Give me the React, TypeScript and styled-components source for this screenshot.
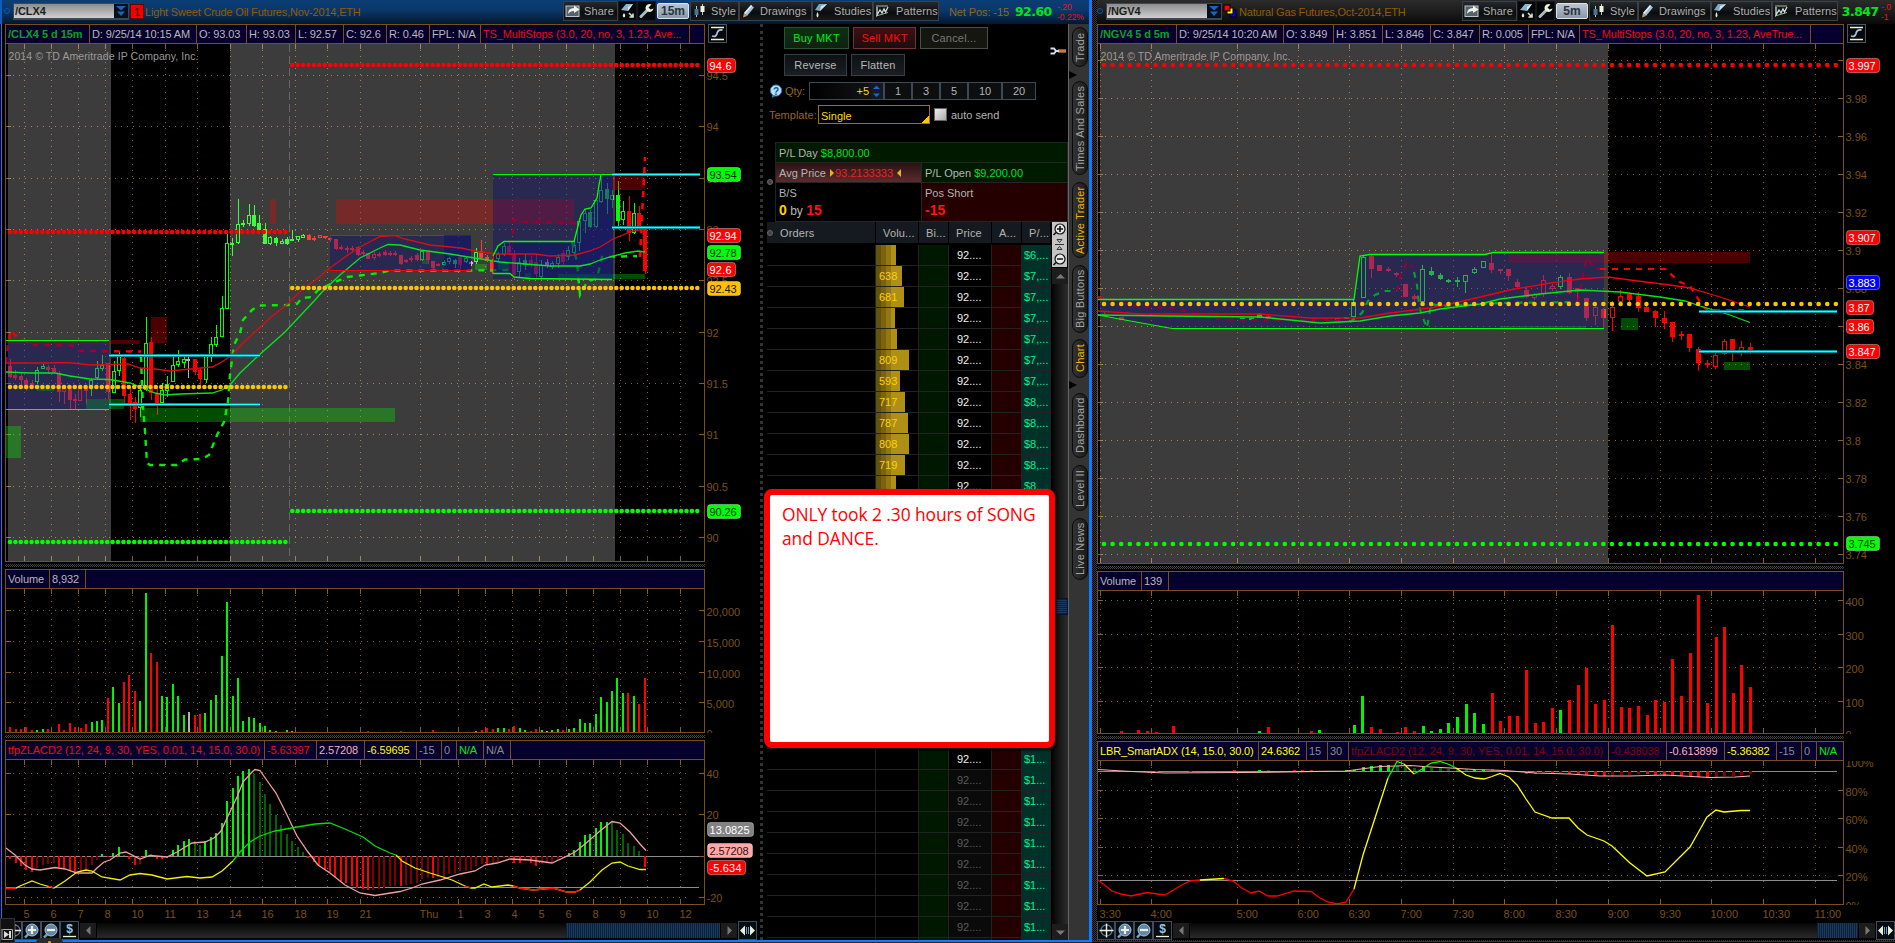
import React from "react";
import styled, { createGlobalStyle, css } from "styled-components";

const BROWN = "#7a5019";
const GRID = "#8c5c20";
const UP = "#00ff00";
const DOWN = "#ff0000";

const GlobalStyle = createGlobalStyle`
  html, body { margin: 0; padding: 0; background: #000; overflow: hidden; }
  body { font-family: "Liberation Sans", Arial, sans-serif; font-size: 11px; color: #b4b4b4; }
  *, *::before, *::after { box-sizing: border-box; }
  svg { display: block; flex: none; }
`;

/* ---------- page frame ---------- */

const Page = styled.div`
  display: flex;
  width: 1895px;
  height: 943px;
  background: #000;
  overflow: hidden;
`;

const LeftWindow = styled.div`
  position: relative;
  display: flex;
  flex-direction: column;
  width: 1092px;
  height: 942px;
  border: solid #0a7dff;
  border-width: 0 3px 2px 0;
  box-shadow: 0 3px 0 #2a2a2a;
`;

const RightWindow = styled.div`
  display: flex;
  flex-direction: column;
  width: 803px;
  height: 942px;
  padding-left: 5px;
  border-bottom: 1px solid #333;
  background: #000 conic-gradient(#3c3c3c 25%, #000 0 50%, #3c3c3c 0 75%, #000 0) 0 0 / 2px 2px;
`;

const LeftBody = styled.div`
  display: flex;
  flex: 1;
  min-height: 0;
  background: #000;
`;

const BlueEdge = styled.div`
  width: 5px;
  border-left: 1px solid #000;
  box-shadow: inset 1px 0 0 #0a7dff;
`;

const ChartColumn = styled.div<{ $w: number }>`
  display: flex;
  flex-direction: column;
  flex: none;
  width: ${(p) => p.$w}px;
  background: #000;
`;

const Gripper = styled.div<{ $w: number }>`
  flex: none;
  width: ${(p) => p.$w}px;
  height: 7px;
  border: solid #000;
  border-width: 2px 0;
  background: conic-gradient(#444 25%, #000 0 50%, #444 0 75%, #000 0) 0 0 / 2px 2px;
`;

/* ---------- title bar ---------- */

const TitleBar = styled.div<{ $blue?: boolean }>`
  display: flex;
  align-items: flex-start;
  flex: none;
  height: 24px;
  padding-left: ${(p) => (p.$blue ? 4 : 0)}px;
  white-space: nowrap;
  overflow: hidden;
  background: ${(p) =>
    p.$blue
      ? "linear-gradient(#0b3d75, #0a3769 45%, #03172c)"
      : "linear-gradient(#2b2b2b, #1c1c1c 50%, #090909)"};
  ${(p) => p.$blue && css`box-shadow: inset 2px 0 0 #0a5fc0;`}
`;

const LinkDot = styled.span`
  width: 6px;
  height: 6px;
  margin: 8px 3px 0 0;
  border: 1.5px solid #0d57ae;
  border-radius: 50%;
`;

const SymbolBox = styled.div`
  display: flex;
  width: 116px;
  height: 17px;
  margin-top: 3px;
  border: 1px solid #3c4757;
  border-bottom-width: 2px;
`;

const SymbolText = styled.span`
  flex: 1;
  padding-left: 1px;
  font-weight: bold;
  line-height: 15px;
  letter-spacing: -0.1px;
  color: #1c1c1c;
  background: linear-gradient(#8c8c8c, #d0d0d0);
`;

const SymbolArrow = styled.span`
  width: 14px;
  background: #070f1a;
`;

const AlertBadge = styled.span`
  width: 14px;
  height: 15px;
  margin: 4px 0 0 1px;
  border: 1px solid #6b0000;
  font-size: 11px;
  line-height: 14px;
  text-align: center;
  color: #200000;
  background: #f00000;
`;

const Title = styled.span<{ $w: number }>`
  width: ${(p) => p.$w}px;
  padding-left: 1px;
  line-height: 25px;
  letter-spacing: -0.18px;
  color: #8f5c06;
`;

const ToolButton = styled.span<{ $w: number; $gap?: number }>`
  display: flex;
  align-items: center;
  gap: ${(p) => p.$gap ?? 3}px;
  width: ${(p) => p.$w}px;
  height: 20px;
  margin-top: 1px;
  padding-left: 1px;
  border: 1px solid #3a4048;
  line-height: 18px;
  letter-spacing: 0.1px;
  color: #b0b0b0;
  background: linear-gradient(#26292c, #0b0c0e 60%, #17191b);
  overflow: hidden;
`;

const ToolIcon = styled(ToolButton)`
  background: #05070a;
  border-color: #15181c;
`;

const Timeframe = styled.span<{ $w: number }>`
  width: ${(p) => p.$w}px;
  height: 16px;
  margin: 3px 1px 0;
  border: 1px solid #dde3ea;
  border-radius: 2px;
  font-size: 12px;
  font-weight: bold;
  line-height: 15px;
  text-align: center;
  color: #2b3340;
  background: linear-gradient(#b9c4d0, #8a98a8);
`;

const NetPos = styled.span`
  width: 66px;
  margin-left: 10px;
  line-height: 24px;
  color: #93661e;
  letter-spacing: -0.1px;
`;

const LastPrice = styled.span<{ $w: number }>`
  width: ${(p) => p.$w}px;
  font-family: "DejaVu Sans", sans-serif;
  font-size: 12.4px;
  font-weight: bold;
  line-height: 24px;
  letter-spacing: -0.5px;
  color: #00e616;
`;

const Change = styled.span`
  display: flex;
  flex-direction: column;
  padding-top: 2px;
  font-size: 8.5px;
  line-height: 10px;
  color: #f01010;
`;

/* ---------- study header ---------- */

const InfoBar = styled.div<{ $w: number }>`
  display: flex;
  flex: none;
  width: ${(p) => p.$w}px;
  height: 20px;
  border: 1px solid ${BROWN};
  background: #06002e;
  overflow: hidden;
`;

const InfoCell = styled.span<{ $w: number; $c?: string; $b?: boolean; $s?: number }>`
  flex: none;
  width: ${(p) => p.$w}px;
  padding-left: 2px;
  border-right: 1px solid ${BROWN};
  line-height: 19px;
  white-space: nowrap;
  color: ${(p) => p.$c ?? "#b8b8b8"};
  font-weight: ${(p) => (p.$b ? "bold" : "normal")};
  letter-spacing: ${(p) => p.$s ?? -0.12}px;
`;

const HeadRow = styled.div`
  display: flex;
  gap: 3px;
`;

const ScaleButton = styled.span`
  width: 19px;
  height: 19px;
  border: 1px solid #4b535e;
  background: #04070c;
`;

/* ---------- bottom tool bar ---------- */

const BottomBar = styled.div`
  display: flex;
  flex: none;
  height: 19px;
`;

const BottomButton = styled.span<{ $w?: number }>`
  width: ${(p) => p.$w ?? 19}px;
  height: 19px;
  border: 1px solid #434c58;
  background: #070c12;
  overflow: hidden;
`;

const Arrow = styled.span`
  display: flex;
  align-items: center;
  justify-content: center;
  width: 16px;
  height: 15px;
  margin: 2px 1px 0;
  background: #1c1c1c;
`;

const Track = styled.span<{ $w: number }>`
  width: ${(p) => p.$w}px;
  height: 15px;
  margin-top: 2px;
  background: linear-gradient(#060606, #2a2a2a);
`;

const Thumb = styled.span<{ $w: number }>`
  width: ${(p) => p.$w}px;
  height: 15px;
  margin-top: 2px;
  background: repeating-linear-gradient(90deg, #0d2038 0 1px, #1a3a60 1px 2px);
`;

/* ---------- order entry ---------- */

const Side = styled.div`
  display: flex;
  flex-direction: column;
  width: 308px;
  height: 916px;
  flex: none;
  border-left: 3px dotted #333;
  overflow: hidden;
`;

const Controls = styled.div`
  height: 118px;
  flex: none;
  padding-left: 6px;
`;

const ButtonRow = styled.div<{ $top: number }>`
  display: flex;
  gap: 4px;
  padding: ${(p) => p.$top}px 0 0 15px;
`;

const OrderButton = styled.span<{ $w: number; $tone?: "buy" | "sell" | "off" }>`
  width: ${(p) => p.$w}px;
  height: 22px;
  border: 1px solid ${(p) => (p.$tone === "buy" ? "#2c5232" : p.$tone === "sell" ? "#6e3434" : p.$tone === "off" ? "#4d4d48" : "#343e48")};
  text-align: center;
  line-height: 21px;
  letter-spacing: 0.2px;
  color: ${(p) => (p.$tone === "buy" ? "#00ea10" : p.$tone === "sell" ? "#ff0a0a" : p.$tone === "off" ? "#777" : "#b8b8b8")};
  background: ${(p) =>
    p.$tone === "buy"
      ? "linear-gradient(#0d3010, #102013)"
      : p.$tone === "sell"
      ? "linear-gradient(#401013, #1c0d0e)"
      : p.$tone === "off"
      ? "#161611"
      : "linear-gradient(#0e1114, #1b1e22)"};
`;

const Spacer = styled.span`
  flex: 1;
`;

/* The tool glyph hangs below its button row */
const SetupIcon = styled.svg`
  width: 17px;
  height: 22px;
  margin-right: 1px;
  overflow: visible;
`;

const QtyRow = styled.div`
  display: flex;
  align-items: center;
  height: 18px;
  margin-top: 6px;
`;

const Label = styled.span<{ $w: number }>`
  width: ${(p) => p.$w}px;
  color: #93661e;
`;

const QtyInput = styled.span`
  display: flex;
  justify-content: flex-end;
  width: 75px;
  height: 18px;
  border: 1px solid #3c4957;
  line-height: 17px;
  color: #ffd000;
  background: linear-gradient(90deg, #000, #181818);
`;

const QtyCell = styled.span<{ $w: number }>`
  width: ${(p) => p.$w}px;
  height: 18px;
  border: 1px solid #3c4957;
  text-align: center;
  line-height: 17px;
  background: #0c0e10;
`;

const TemplateRow = styled.div`
  display: flex;
  align-items: center;
  height: 19px;
  margin-top: 5px;
`;

const TemplateBox = styled.span`
  width: 112px;
  height: 19px;
  margin-right: 4px;
  padding-left: 2px;
  border: 1px solid #a87008;
  line-height: 20px;
  color: #ffd800;
  background: linear-gradient(315deg, #ffc800 5px, transparent 5.5px);
`;

const Check = styled.span`
  width: 13px;
  height: 13px;
  margin-right: 4px;
  border: 1px solid #666;
  background: linear-gradient(135deg, #eee, #aaa);
`;

const SummaryRow = styled.div`
  display: flex;
  align-items: center;
  flex: none;
  height: 80px;
`;

const Pin = styled.span`
  flex: none;
  width: 6px;
  height: 6px;
  margin: 0 2px 0 4px;
  border: 1px solid #666;
  border-radius: 50%;
  background: #444;
`;

const Summary = styled.div`
  display: grid;
  grid-template: 20px 20px 39px / 146px 1fr;
  flex: 1;
  height: 80px;
  border-left: 1px solid #222;
  border-top: 1px solid #222;
`;

const SummaryCell = styled.div<{ $bg: string; $wide?: boolean }>`
  padding-left: 3px;
  border: solid #252525;
  border-width: 0 1px 1px 0;
  line-height: 20px;
  white-space: nowrap;
  background: ${(p) => p.$bg};
  ${(p) => p.$wide && css`grid-column: 1 / 3;`}
  em { font-style: normal; color: #00e020; }
  i { font-style: normal; color: #f02020; }
`;

const Mark = styled.span<{ $left?: boolean }>`
  display: inline-block;
  margin: 0 ${(p) => (p.$left ? 0 : 1)}px 0 1px;
  border: 4px solid transparent;
  ${(p) => (p.$left ? "border-right-color: #e8b41c; border-left: 0;" : "border-left-color: #e8b41c; border-right: 0;")}
`;

const Big = styled.div`
  line-height: 14px;
  color: #b8b8b8;
  font-size: 12px;
  b { font-size: 14px; color: #ff1414; }
  b:first-child:not(:last-child) { color: #ffd000; }
`;

const LadderArea = styled.div`
  display: flex;
  flex: 1;
  min-height: 0;
`;

const Ladder = styled.div`
  width: 284px;
  margin-left: 4px;
  flex: none;
  overflow: hidden;
`;

const ladderCols = "109px 43px 30px 43px 30px 29px";

const LadderHead = styled.div`
  display: grid;
  grid-template-columns: ${ladderCols};
  height: 21px;
  margin-bottom: 2px;
  line-height: 22px;
  letter-spacing: 0.15px;
`;

const HeadCell = styled.span<{ $pin?: boolean }>`
  display: flex;
  align-items: center;
  padding-left: ${(p) => (p.$pin ? 0 : 7)}px;
  border-right: 1px solid #000;
  background: #141a1f;
  white-space: nowrap;
  overflow: hidden;
  ${Pin} { margin: 0 7px 0 0; }
`;

const LadderRow = styled.div<{ $dim: boolean }>`
  display: grid;
  grid-template-columns: ${ladderCols};
  height: 21px;
  line-height: 21px;
  color: ${(p) => (p.$dim ? "#5c5c5c" : "#f0f0f0")};
  span { border: solid #222; border-width: 0 1px 1px 0; white-space: nowrap; overflow: hidden; }
  span:nth-child(3) { background: #001800; }
  span:nth-child(4) { padding-left: 8px; background: ${(p) => (p.$dim ? "#0a0a0a" : "#000")}; }
  span:nth-child(5) { background: #240000; }
  span:nth-child(6) { padding-left: 2px; color: #00f090; background: #00302a; }
`;

const VolumeCell = styled.span`
  background: #000;
`;

const VolumeFill = styled.div<{ $w: number }>`
  width: ${(p) => p.$w}px;
  height: 20px;
  padding-left: 3px;
  color: #ffd000;
  white-space: nowrap;
  background: linear-gradient(90deg, #64510c 0 5px, #7a620e 5px 10px, #927813 10px 15px, #ae9016 15px);
`;

const Scroll = styled.div`
  display: flex;
  flex-direction: column;
  width: 16px;
  margin-left: 1px;
`;

const ScrollTrack = styled.div<{ $h: number }>`
  height: ${(p) => p.$h}px;
  flex: none;
  background: linear-gradient(90deg, #050505, #2c2c2c);
`;

const ScrollThumb = styled.div`
  height: 17px;
  flex: none;
  border: 1px solid #081424;
  background: repeating-linear-gradient(#0d2038 0 1px, #1a3a60 1px 2px);
`;

const ScrollBtn = styled.div`
  display: flex;
  align-items: center;
  justify-content: center;
  height: 16px;
  flex: none;
  background: #1d1d1d;
`;

const TabStrip = styled.div`
  display: flex;
  flex-direction: column;
  align-items: flex-end;
  width: 21px;
  padding-right: 1px;
  border-left: 1px solid #666;
  background: #343434;
`;

const Tab = styled.div<{ $h: number; $gap: number; $on?: boolean }>`
  display: flex;
  align-items: center;
  justify-content: center;
  width: 16px;
  height: ${(p) => p.$h}px;
  margin-top: ${(p) => p.$gap}px;
  flex: none;
  border: 1px solid #0a0a0a;
  border-radius: 8px;
  writing-mode: vertical-rl;
  transform: rotate(180deg);
  letter-spacing: 0.2px;
  white-space: nowrap;
  color: ${(p) => (p.$on ? "#f0b400" : "#a4a4a4")};
  background: linear-gradient(90deg, #1a1a1a, #333);
`;

const TabArrow = styled.div<{ $gap: number }>`
  align-self: flex-start;
  width: 0;
  height: 0;
  margin: ${(p) => p.$gap}px 0 0;
  border: 4px solid transparent;
  border-left: 8px solid #000;
  border-right: 0;
`;

/* Sticky note that floats over the ladder */
const Note = styled.div`
  position: absolute;
  left: 764px;
  top: 489px;
  width: 291px;
  height: 259px;
  padding: 7px 12px;
  border: 6px solid #ff0000;
  border-radius: 8px;
  box-shadow: 2px 2px 3px rgba(0, 0, 0, 0.8);
  font-family: "Open Sans", "Noto Sans", sans-serif;
  font-size: 17.4px;
  line-height: 24px;
  white-space: nowrap;
  letter-spacing: -0.07px;
  color: #ff0000;
  background: #fff;
`;

/* Corner controls that sit over the window's lower edge */
const CornerTool = styled.div`
  position: absolute;
  left: 0;
  top: 918px;
  width: 15px;
  height: 25px;
  padding-top: 9px;
  border: 1px solid #333;
  background: #111;
`;

const Notch = styled.div`
  position: absolute;
  left: 36px;
  top: 938px;
  width: 27px;
  height: 6px;
  border-radius: 5px 5px 0 0;
  background: radial-gradient(circle at 50% 80%, #d8a018 1.5px, #2a2a2a 2px);
`;

/* ---------- icons ---------- */

const ShareIcon = () => (
  <svg width="16" height="14" viewBox="0 0 16 14">
    <rect x="1" y="2" width="13" height="10.5" fill="#54626f" stroke="#b9c6d0" />
    <path d="M3 10 Q3 4 9 4 V1.5 L14.5 5.5 L9 9 V7 Q5 7 3 10Z" fill="#f2f2e2" />
  </svg>
);
const FilterIcon = () => (
  <svg width="16" height="16" viewBox="0 0 16 16">
    <path d="M1 7 L6 1 H13 L8 8Z" fill="#8fb2cc" />
    <path d="M8 4 L13 1 L8 8Z" fill="#dcebf2" />
    <path d="M4 10 Q1.5 13 4 14.5 Q6.5 13 4 10Z" fill="#e8ecc8" />
    <path d="M9 10 L13 14 M13 10.5 V14 H9.5" stroke="#d8e2c8" strokeWidth="1.6" fill="none" />
  </svg>
);
const WrenchIcon = () => (
  <svg width="16" height="16" viewBox="0 0 16 16">
    <path d="M2 13.5 L8.5 7" stroke="#a9bcc4" strokeWidth="3" strokeLinecap="round" />
    <path d="M12.5 1.5 A4 4 0 1 0 14.5 5.5 L11.5 6.5 L9.5 4.5Z" fill="#ecf0dc" />
  </svg>
);
const CandleIcon = () => (
  <svg width="15" height="16" viewBox="0 0 15 16">
    <path d="M4.5 3 V14 M10.5 1 V12" stroke="#b9c4cc" />
    <rect x="2.5" y="6" width="4" height="6" fill="#4d7394" />
    <rect x="8.5" y="3" width="4" height="6" fill="#eef2dc" />
  </svg>
);
const PencilIcon = () => (
  <svg width="15" height="16" viewBox="0 0 15 16">
    <path d="M3 10 L10 2 L13 4.5 L6 13Z" fill="#9fc0d8" />
    <path d="M3 10 L10 2 L11.2 3 L4.3 11Z" fill="#e4eff5" />
    <path d="M3 10 L6 13 L2 14.5Z" fill="#d09a50" />
  </svg>
);
const StudyIcon = () => (
  <svg width="15" height="16" viewBox="0 0 15 16">
    <path d="M1 7 L5 1 H13 L6 8Z" fill="#7ea4c0" />
    <path d="M7 3 L13 1 L6 8Z" fill="#d3e4ee" />
    <path d="M3.5 9 Q1.5 13 3.5 14.5 Q5.5 13 3.5 9Z" fill="#e8ecc8" />
  </svg>
);
const PatternIcon = () => (
  <svg width="15" height="14" viewBox="0 0 15 14">
    <path d="M1 2 H13 M1 12 L13 8.5" stroke="#9fbe8c" />
    <path d="M2 3 V11 L5 6 L7 9 L9 5 L10.5 8 L13 3" stroke="#d4e0e8" strokeWidth="1.3" fill="none" />
  </svg>
);
const SCurve = () => (
  <svg width="17" height="17" viewBox="0 0 17 17">
    <path d="M2 2.5 H15 M2 14.5 H15" stroke="#f4f2c8" strokeWidth="1.4" />
    <path d="M3 11 Q7 12.5 8 8.5 Q9 4 13.5 5" stroke="#9fc6e0" strokeWidth="1.8" fill="none" />
  </svg>
);
const DoubleDown = () => (
  <svg width="14" height="14" viewBox="0 0 14 14">
    <path d="M2 2 H12 L7 6.5Z M3 7.5 H11 L7 12Z" fill="#1c63ba" />
  </svg>
);
const CrossIcon = () => (
  <svg width="17" height="17" viewBox="0 0 17 17">
    <circle cx="8.5" cy="8.5" r="5.5" fill="none" stroke="#5a7690" strokeWidth="1.3" />
    <path d="M8.5 1.5 V15.5 M1.5 8.5 H15.5" stroke="#eef0d4" strokeWidth="1.4" />
  </svg>
);
const ZoomIcon = ({ minus }: { minus?: boolean }) => (
  <svg width="17" height="17" viewBox="0 0 17 17">
    <path d="M2 15.5 L5 12.5" stroke="#7ca6c8" strokeWidth="2.4" />
    <circle cx="9" cy="8" r="6" fill="#6288a8" stroke="#a4c2d8" />
    <path d={minus ? "M5 8 H13" : "M5 8 H13 M9 4 V12"} stroke="#f0f0d8" strokeWidth="2.2" />
  </svg>
);
const DollarIcon = () => (
  <svg width="17" height="17" viewBox="0 0 17 17">
    <text x="8.5" y="11" fontSize="12" fontWeight="bold" textAnchor="middle" fill="#9cc4e0">$</text>
    <path d="M2 14.5 H15" stroke="#f4f2c8" strokeWidth="1.3" />
  </svg>
);
const ExpandIcon = () => (
  <svg width="17" height="17" viewBox="0 0 17 17">
    <path d="M1 8.5 L6 3.5 V13.5Z M16 8.5 L11 3.5 V13.5Z" fill="#e8efd8" />
    <path d="M7.5 5 V12 M9.5 5 V12" stroke="#6d9cc4" />
  </svg>
);
const Tri = ({ d }: { d: string }) => (
  <svg width="9" height="9" viewBox="0 0 9 9">
    <path d={d} fill="#777" />
  </svg>
);

/* ---------- chart primitives ---------- */

type Candle = [number, number, number, number, number, string];

const candleColor = (k: string) => (k === "w" ? "#b4b4b4" : k.toLowerCase() === "g" ? UP : DOWN);

const Candles = ({ data, w }: { data: Candle[]; w: number }) => (
  <g shapeRendering="crispEdges">
    {data.map(([x, hi, lo, top, bot, k], i) => {
      const c = candleColor(k);
      const hollow = k === "g" || k === "r";
      const cx = Math.floor(x);
      const l = cx - Math.floor(w / 2);
      const h = Math.max(2, bot - top);
      return (
        <g key={i}>
          <path d={`M${cx + 0.5} ${hi} V${hollow ? top : lo} M${cx + 0.5} ${bot} V${Math.max(lo, bot)}`} stroke={c} />
          {hollow ? (
            <rect x={l + 0.5} y={top + 0.5} width={w - 1} height={Math.max(1, h - 1)} fill="#000" stroke={c} />
          ) : (
            <rect x={l} y={top} width={w} height={h} fill={c} />
          )}
        </g>
      );
    })}
  </g>
);

type GridProps = { xs: number[]; ys: number[]; l: number; r: number; t: number; b: number };

const Grid = ({ xs, ys, l, r, t, b }: GridProps) => (
  <g stroke={GRID} shapeRendering="crispEdges" fill="none">
    {xs.map((x) => (
      <g key={x}>
        <path d={`M${x} ${t + 6} V${b - 13}`} strokeDasharray="1 5" />
        <path d={`M${x} ${t} V${t + 5} M${x} ${b - 5} V${b}`} />
      </g>
    ))}
    {ys.map((y) => (
      <g key={y}>
        <path d={`M${l + 8} ${y} H${r - 14}`} strokeDasharray="1 5" />
        <path d={`M${l} ${y} H${l + 6} M${r - 5} ${y} H${r}`} />
      </g>
    ))}
  </g>
);

const Frame = ({ l, r, t, b }: { l: number; r: number; t: number; b: number }) => (
  <path d={`M${l + 0.5} ${t} V${b + 0.5} H${r + 0.5} V${t}`} fill="none" stroke={BROWN} shapeRendering="crispEdges" />
);

const Dots = ({ x1, x2, y, step, c }: { x1: number; x2: number; y: number; step: number; c: string }) => {
  const out: number[] = [];
  for (let x = x1; x <= x2; x += step) out.push(x);
  return (
    <g fill={c}>
      {out.map((x) => (
        <circle key={x} cx={x} cy={y} r="2.3" />
      ))}
    </g>
  );
};

const Cyan = ({ x1, x2, y }: { x1: number; x2: number; y: number }) => (
  <g shapeRendering="crispEdges">
    <path d={`M${x1} ${y} H${x2}`} stroke="#009097" strokeWidth="3" />
    <path d={`M${x1} ${y} H${x2}`} stroke="#20ffff" />
  </g>
);

const Line = ({ p, c, w = 1.3, dash }: { p: string; c: string; w?: number; dash?: boolean }) => (
  <polyline points={p} fill="none" stroke={c} strokeWidth={w} strokeDasharray={dash ? "6 6" : undefined} />
);

const Labels = ({ x, items }: { x: number; items: [string, number][] }) => (
  <g fill={BROWN} fontSize="11">
    {items.map(([s, y]) => (
      <text key={s} x={x} y={y + 4.5}>{s}</text>
    ))}
  </g>
);

const Tag = ({ x, y, w, s, bg, fg = "#fff" }: { x: number; y: number; w: number; s: string; bg: string; fg?: string }) => (
  <g>
    <rect x={x + 0.5} y={y + 0.5} width={w - 1} height="14" rx="3" fill={bg} stroke="#fff" strokeOpacity="0.35" />
    <text x={x + 2.5} y={y + 11.5} fontSize="11" fill={fg} textLength={w - 7}>{s}</text>
  </g>
);

/* bars: x, y of the far end, colour key; d/D are the faded green and red */
type Bar = [number, number, string];
const barColor: Record<string, string> = { g: "#00f400", r: "#ff0000", w: "#b4b4b4", d: "#006400", D: "#800000" };
const Bars = ({ data, base, w }: { data: Bar[]; base: number; w: number }) => (
  <g shapeRendering="crispEdges">
    {data.map(([x, y, k], i) => (
      <rect key={i} x={x - 1} y={Math.min(y, base)} width={w} height={Math.max(1, Math.abs(base - y))} fill={barColor[k]} />
    ))}
  </g>
);

/* ---------- crude oil data ---------- */

const clX = [24.5, 51.5, 78.5, 105.5, 132.5, 165.5, 197.5, 230.5, 262.5, 295.5, 327.5, 360.5, 420.5, 458.5, 485.5, 512.5, 539.5, 566.5, 593.5, 620.5, 647.5, 680.5];
const clTimes = ["5", "6", "7", "8", "10", "11", "13", "14", "16", "18", "19", "21", "Thu", "1", "3", "4", "5", "6", "8", "9", "10", "12"];
const clY = [75.5, 126.5, 178.5, 229.5, 280.5, 332.5, 383.5, 434.5, 486.5, 537.5];
const clPrices = ["94.5", "94", "93.5", "93", "92.5", "92", "91.5", "91", "90.5", "90"];

const clCandles: Candle[] = [
  [10, 359, 378, 366, 377, "R"], [15, 370, 380, 375, 378, "R"], [21, 372, 387, 376, 380, "R"], [26, 378, 391, 380, 386, "R"],
  [32, 380, 387, 383, 387, "R"], [37, 367, 384, 370, 382, "g"], [43, 364, 369, 366, 369, "g"], [48, 365, 374, 367, 370, "R"],
  [54, 365, 373, 368, 372, "R"], [59, 371, 402, 373, 392, "R"], [64, 386, 404, 387, 392, "r"], [70, 385, 409, 386, 400, "R"],
  [75, 394, 409, 399, 401, "R"], [80, 385, 401, 387, 401, "r"], [86, 387, 404, 388, 391, "R"], [91, 378, 396, 380, 388, "g"],
  [97, 361, 379, 368, 378, "g"], [102, 355, 371, 365, 369, "g"], [108, 363, 399, 363, 392, "R"], [114, 361, 393, 371, 393, "g"],
  [119, 352, 376, 356, 371, "g"], [124, 354, 406, 358, 396, "R"], [130, 387, 420, 394, 403, "R"], [135, 397, 423, 402, 409, "R"],
  [140, 385, 417, 390, 408, "g"], [146, 317, 391, 343, 390, "g"], [151, 337, 400, 342, 393, "R"], [157, 388, 415, 393, 404, "R"],
  [162, 383, 405, 390, 403, "g"], [167, 376, 397, 384, 391, "g"], [173, 354, 382, 365, 382, "g"], [178, 350, 367, 361, 365, "g"],
  [184, 356, 368, 359, 363, "g"], [188, 357, 378, 359, 361, "w"], [195, 359, 375, 359, 372, "R"], [200, 368, 386, 370, 379, "R"],
  [206, 354, 383, 354, 380, "g"], [211, 337, 362, 344, 355, "g"], [216, 325, 347, 337, 345, "g"], [222, 296, 337, 308, 337, "g"],
  [227, 234, 309, 243, 309, "g"], [232, 238, 256, 243, 245, "G"], [238, 199, 244, 224, 243, "g"], [243, 220, 227, 223, 225, "G"],
  [249, 204, 226, 215, 224, "g"], [254, 205, 227, 215, 226, "G"], [259, 215, 230, 223, 230, "G"], [265, 223, 244, 229, 244, "G"],
  [270, 236, 245, 237, 244, "g"], [276, 237, 246, 238, 243, "G"], [282, 239, 244, 241, 244, "g"], [287, 237, 245, 239, 244, "G"],
  [292, 230, 241, 239, 241, "G"], [298, 236, 242, 236, 240, "g"], [303, 234, 238, 235, 238, "g"], [309, 234, 240, 235, 240, "R"],
  [314, 236, 241, 238, 240, "R"], [320, 235, 238, 235, 238, "r"], [325, 236, 239, 236, 238, "R"], [330, 237, 242, 238, 240, "R"],
  [336, 239, 250, 239, 249, "R"], [341, 245, 250, 247, 249, "R"], [347, 246, 253, 248, 250, "R"], [352, 246, 253, 248, 250, "r"],
  [358, 246, 256, 247, 255, "R"], [363, 250, 256, 252, 254, "R"], [368, 253, 259, 253, 259, "R"], [374, 252, 260, 254, 258, "r"],
  [379, 252, 257, 254, 255, "R"], [385, 250, 256, 252, 255, "R"], [390, 251, 256, 253, 255, "R"], [395, 251, 256, 253, 255, "R"],
  [401, 255, 265, 255, 264, "R"], [406, 259, 263, 260, 262, "R"], [411, 256, 262, 258, 260, "R"], [417, 253, 261, 255, 260, "R"],
  [422, 250, 261, 251, 260, "g"], [428, 250, 264, 251, 260, "R"], [433, 261, 270, 261, 268, "R"], [438, 263, 266, 264, 265, "R"],
  [444, 260, 266, 262, 265, "g"], [449, 257, 264, 258, 262, "g"], [455, 259, 268, 260, 264, "G"], [460, 255, 269, 257, 265, "R"],
  [466, 257, 263, 258, 262, "g"], [471, 261, 266, 262, 264, "w"], [476, 248, 264, 252, 262, "g"], [481, 240, 259, 251, 258, "R"],
  [487, 255, 262, 257, 261, "R"], [492, 259, 274, 260, 272, "R"], [498, 252, 262, 254, 259, "g"], [504, 243, 256, 246, 255, "g"],
  [509, 242, 255, 246, 253, "R"], [514, 250, 280, 255, 275, "R"], [519, 258, 278, 262, 272, "g"], [525, 254, 270, 260, 265, "G"],
  [531, 256, 268, 260, 264, "R"], [536, 255, 278, 262, 274, "R"], [541, 260, 279, 265, 277, "g"], [547, 259, 268, 262, 265, "w"],
  [552, 261, 269, 263, 267, "g"], [558, 254, 268, 257, 264, "g"], [563, 250, 265, 253, 262, "R"], [568, 246, 260, 250, 257, "g"],
  [574, 240, 256, 245, 253, "g"], [579, 218, 251, 221, 243, "g"], [585, 209, 233, 213, 221, "g"], [590, 210, 228, 212, 227, "G"],
  [596, 198, 228, 200, 227, "g"], [601, 179, 203, 190, 202, "g"], [607, 183, 214, 189, 199, "G"], [612, 190, 208, 195, 200, "g"],
  [618, 181, 227, 195, 221, "G"], [623, 201, 225, 211, 220, "g"], [629, 196, 241, 211, 233, "R"], [634, 203, 234, 213, 233, "g"],
  [639, 206, 229, 213, 227, "R"], [645, 227, 274, 227, 271, "R"],
];

const parseBars = (s: string): Bar[] =>
  s.trim().split(/\s+/).map((t) => {
    const [x, y, k] = t.split(",");
    return [Number(x), Number(y), k] as Bar;
  });

const clVolume = parseBars(`10,727,r 16,729,r 21,729,r 26,727,r 32,730,r 37,730,g 43,729,g 48,729,r 59,724,r 64,730,r 70,723,r 75,727,r 81,728,r 86,724,r
92,722,g 97,721,g 102,720,g 108,698,r 113,687,g 119,703,g 124,682,r 129,675,r 135,691,r 140,701,g 146,593,g 151,653,r 157,662,r 162,696,g 167,697,g
173,684,g 178,696,g 184,715,g 189,712,w 195,715,r 200,714,r 205,713,g 211,700,g 216,695,g 222,656,g 227,602,g 233,696,g 238,678,g 243,721,g 249,717,g
254,718,g 260,723,g 265,726,g 270,730,g 276,731,g 287,730,g 292,731,g 368,731,r 401,731,r 433,730,r 476,731,g 482,730,r 487,728,r 493,729,r 498,728,g
504,728,g 509,729,r 514,726,r 520,728,g 525,730,g 531,731,r 536,729,r 542,730,g 547,731,w 552,730,g 558,729,g 563,730,r 569,729,g 574,728,g 580,719,g
585,723,g 590,723,g 596,714,g 601,697,g 607,702,g 612,691,g 617,678,g 623,693,g 628,693,r 634,696,g 639,704,r 645,678,r`);

const clHist = parseBars(`10,859,r 16,863,r 21,866,r 26,870,r 32,872,r 37,868,D 43,865,D 48,864,D 54,863,D 59,867,r 64,869,r 70,871,r 75,873,r 81,872,D 86,870,D
92,865,D 97,860,D 102,854,g 108,857,r 113,853,g 119,847,g 124,855,d 129,859,r 135,865,r 140,864,D 146,850,g 151,854,d 157,859,r 162,859,r 167,858,r 173,850,g
178,845,g 184,841,g 189,839,g 195,841,d 200,845,d 205,841,g 211,837,g 216,833,g 222,823,g 227,801,g 233,788,g 238,776,g 243,771,g 249,769,g 254,774,d
260,782,d 265,794,d 270,804,d 276,815,d 281,825,d 287,834,d 292,841,d 298,847,d 303,852,d 308,858,r 314,862,r 319,865,r 325,869,r 330,872,r 335,877,r
341,881,r 346,883,r 352,886,r 357,888,r 363,889,r 368,890,r 373,890,D 379,889,D 384,888,D 390,886,D 395,886,D 401,886,r 406,885,D 411,884,D 417,883,D
422,879,D 428,878,D 433,878,r 438,877,D 444,877,D 449,874,D 455,873,D 460,871,D 466,871,D 471,870,D 476,866,D 482,864,D 487,865,r 493,864,D 498,862,D
504,858,D 509,858,D 514,863,r 520,863,r 525,861,D 531,863,r 536,866,r 542,864,D 547,863,D 552,862,D 558,860,D 563,858,D 569,853,g 574,850,g 580,842,g
585,835,g 590,834,g 596,828,g 601,822,g 607,822,g 612,822,d 617,830,d 623,834,d 628,843,d 634,846,d 639,851,d 645,867,r`);

/* ---------- natural gas data ---------- */

const ngX = [1100.5, 1151.5, 1237.5, 1298.5, 1349.5, 1401.5, 1453.5, 1504.5, 1556.5, 1608.5, 1660.5, 1711.5, 1763.5, 1815.5];
const ngTimes = ["3:30", "4:00", "5:00", "6:00", "6:30", "7:00", "7:30", "8:00", "8:30", "9:00", "9:30", "10:00", "10:30", "11:00"];
const ngY = [60.5, 98.5, 136.5, 174.5, 212.5, 250.5, 288.5, 326.5, 364.5, 402.5, 440.5, 478.5, 516.5, 554.5];
const ngPrices = ["4", "3.98", "3.96", "3.94", "3.92", "3.9", "3.88", "3.86", "3.84", "3.82", "3.8", "3.78", "3.76", "3.74"];

const ngCandles: Candle[] = [
  [1104, 311, 316, 314, 316, "r"], [1121, 317, 320, 317, 320, "R"], [1242, 318, 320, 318, 320, "g"], [1251, 317, 320, 318, 320, "G"],
  [1259, 313, 318, 314, 318, "G"], [1268, 315, 320, 316, 319, "R"], [1337, 318, 320, 318, 320, "G"], [1346, 317, 319, 317, 319, "g"],
  [1353, 300, 318, 302, 317, "g"], [1363, 256, 298, 257, 298, "g"], [1371, 255, 278, 256, 269, "R"], [1379, 265, 271, 265, 271, "R"],
  [1388, 267, 272, 269, 271, "R"], [1396, 272, 277, 273, 275, "R"], [1405, 284, 297, 284, 297, "R"], [1414, 294, 302, 296, 299, "R"],
  [1422, 265, 302, 269, 302, "g"], [1431, 267, 276, 271, 275, "G"], [1440, 273, 280, 275, 279, "G"], [1448, 279, 283, 280, 282, "G"],
  [1457, 277, 287, 280, 282, "G"], [1465, 275, 293, 275, 282, "g"], [1474, 267, 274, 269, 273, "g"], [1483, 261, 268, 261, 268, "g"],
  [1491, 254, 273, 263, 270, "R"], [1500, 269, 274, 269, 271, "R"], [1508, 269, 281, 269, 276, "R"], [1517, 279, 288, 282, 287, "R"],
  [1526, 286, 298, 290, 297, "R"], [1534, 293, 300, 294, 298, "r"], [1543, 275, 297, 280, 294, "r"], [1552, 284, 291, 286, 289, "r"],
  [1560, 275, 289, 277, 287, "g"], [1569, 273, 294, 277, 293, "R"], [1577, 288, 302, 288, 292, "R"], [1586, 298, 321, 298, 318, "R"],
  [1595, 305, 325, 307, 316, "r"], [1603, 308, 328, 309, 318, "R"], [1612, 301, 331, 307, 318, "r"], [1620, 290, 305, 296, 302, "r"],
  [1629, 292, 303, 294, 300, "R"], [1638, 292, 312, 296, 308, "R"], [1646, 305, 312, 307, 312, "R"], [1655, 310, 327, 311, 318, "R"],
  [1664, 311, 329, 318, 323, "R"], [1672, 322, 342, 322, 337, "R"], [1681, 331, 340, 334, 336, "R"], [1689, 334, 352, 334, 348, "R"],
  [1698, 347, 371, 349, 363, "R"], [1707, 360, 368, 363, 365, "R"], [1715, 353, 369, 355, 367, "r"], [1724, 339, 355, 341, 354, "r"],
  [1732, 339, 361, 339, 353, "R"], [1741, 341, 356, 347, 353, "r"], [1750, 343, 354, 347, 352, "R"],
];

const ngVolume = parseBars(`1121,731,r 1138,730,r 1147,731,r 1156,732,r 1173,726,r 1259,731,g 1268,727,r 1311,731,r 1319,730,g 1354,725,g 1362,696,g
1371,727,r 1380,729,r 1397,732,r 1405,727,r 1414,731,r 1423,726,g 1431,731,g 1440,729,g 1448,723,g 1457,717,g 1466,704,g 1474,713,g 1483,724,g 1492,693,r
1500,721,r 1509,716,r 1517,716,r 1526,670,r 1535,723,r 1543,722,r 1552,708,r 1560,710,g 1569,700,r 1578,685,r 1586,668,r 1595,704,r 1604,700,r 1612,625,r
1621,707,r 1629,708,r 1638,706,r 1647,715,r 1655,700,r 1664,702,r 1672,659,r 1681,696,r 1690,653,r 1698,595,r 1707,703,r 1716,637,r 1724,627,r 1733,693,r
1741,665,r 1750,687,r`);

const ngHist = parseBars(`1113,770,r 1156,772,r 1190,772,r 1234,770,r 1259,770,g 1268,770,d 1294,770,r 1302,770,r 1311,770,r 1320,772,g 1346,770,g 1354,770,g
1363,767,g 1371,766,g 1380,765,g 1388,765,g 1397,766,d 1405,767,d 1414,768,d 1423,767,g 1431,768,d 1440,768,d 1448,769,d 1457,769,d 1466,769,d 1474,770,g
1483,770,g 1492,769,d 1526,774,r 1535,774,r 1543,773,D 1552,774,r 1560,773,D 1569,774,r 1578,774,r 1586,775,r 1595,775,r 1604,776,r 1612,776,D 1621,775,D
1629,775,D 1638,774,D 1647,774,r 1655,775,r 1664,775,r 1672,775,r 1681,776,r 1690,776,r 1698,777,r 1707,778,r 1716,777,D 1724,776,D 1733,776,D 1741,775,D
1750,774,D`);

/* ---------- crude charts ---------- */

const BOX = "rgba(0,0,128,0.32)";
const REDZONE = "rgba(255,0,0,0.3)";
const GREENZONE = "rgba(0,255,0,0.3)";

const CrudePrice = () => (
  <svg width="755" height="518" viewBox="5 44 755 518">
    <Grid xs={clX} ys={clY} l={5} r={704} t={44} b={561} />
    <Candles data={clCandles} w={4} />
    <g fill="rgba(255,255,255,0.235)" shapeRendering="crispEdges">
      <rect x="8" y="44" width="103" height="517" />
      <rect x="230" y="44" width="385" height="517" />
    </g>
    <path d="M289.5 44 V561" stroke="#666" strokeDasharray="8 4" />
    <g fill={REDZONE} shapeRendering="crispEdges">
      <rect x="336" y="199" width="238" height="25" />
      <rect x="270" y="199" width="6" height="25" />
      <rect x="6" y="340" width="134" height="4" />
      <rect x="151" y="317" width="16" height="26" />
      <rect x="612" y="175" width="33" height="15" />
    </g>
    <g fill={GREENZONE} shapeRendering="crispEdges">
      <rect x="6" y="426" width="15" height="32" />
      <rect x="140" y="408" width="255" height="14" />
      <rect x="86" y="399" width="38" height="10" />
      <rect x="37" y="385" width="17" height="6" />
      <rect x="558" y="274" width="87" height="5" />
      <rect x="475" y="264" width="12" height="6" />
      <rect x="498" y="261" width="11" height="9" />
      <rect x="422" y="259" width="6" height="5" />
      <rect x="525" y="273" width="6" height="5" />
    </g>
    <Line p="6,363 8,345 11,330 14,334 20,339 28,342 33,345 72,345.5 77,351 141,351.5" c="#f00000" w={2.4} dash />
    <Line p="510,270 512,243 514,219 520,222 576,223.5" c="#e00010" w={2.4} dash />
    <Line p="141,356 142,385 143,407 145,431 147,463 150,465 177,465 185,459.5 202,459 209,455 217,435 224,422 228,402 230,375 234,345 240,333 243,320 252,310 259,305.5 290,305 297,304 302,298 312,297 318,290 335,282 347,277 360,275.5 380,273 390,270.5 470,270.5 510,270" c="#00f000" w={2.4} dash />
    <Line p="572,242 577,262 580,295 587,282 597,278 602,257 637,256" c="#00f000" w={2.4} dash />
    <g fill={BOX}>
      <rect x="6" y="340" width="103" height="69" />
      <rect x="330" y="235" width="141" height="35" />
      <rect x="444" y="235" width="27" height="35" />
      <rect x="493" y="174" width="120" height="105" />
      <path d="M493 254 L498 246 L504 241 L574 241 L578 226 L581 215 L585 209 L591 208 L597 198 L599 185 L601 175 H613 V279 H530 L514 277 L510 273 H493Z" />
    </g>
    <Line p="640,257 642,215 644,180 645,157" c="#ff0000" w={2.6} dash />
    <Line p="6,363 50,363 60,362.5 73,363 90,365 128,364 140,368 155,369 170,371 185,369.5 212,367 220,363 231,356 243,343 257,330 270,318 285,306 292,299.5 305,287 313,282 330,268 345,257 360,247 380,236.5 394,235.5 405,239 430,245 461,248 480,252 500,254 535,254 550,256 575,255 590,251 600,247 613,239 625,234 633,231 645,229" c="#dc0c14" />
    <Line p="6,372 30,373 55,373 70,376 90,379 110,379.5 130,383 145,389 155,393 165,395 180,394 212,393 222,390 230,385 240,373 258,356 285,332 300,316 315,300 322,292 340,275 360,258 380,248 388,244.5 400,245 420,250 450,254 475,258 500,262 525,264 550,266 580,266 590,264 600,260 610,257 625,253 638,251 645,252" c="#00e61e" />
    <Line p="6,340.5 109,340.5" c={UP} w={1} />
    <Line p="6,409.5 109,409.5" c={UP} w={1} />
    <Line p="330,235.5 444,235.5" c={DOWN} w={1} />
    <Line p="444,235.5 471,235.5" c="#1414ff" w={1} />
    <Line p="330,270.5 471,270.5" c={DOWN} w={1} />
    <Line p="493.5,255 493.5,273" c={DOWN} w={1} />
    <Line p="493,174.5 613,174.5" c={UP} w={1} />
    <Line p="493,256 498,246 504,241.5 574,241.5 578,226 581,215 585,209 591,208 597,198 599,185 601,175" c={UP} />
    <Line p="493,273.5 510,273.5 514,277 530,278.5 612,279.5" c={UP} />
    <Cyan x1={109} x2={260} y={355.5} />
    <Cyan x1={109} x2={260} y={404.5} />
    <Cyan x1={612} x2={700} y={174.5} />
    <Cyan x1={612} x2={700} y={227.5} />
    <Dots x1={10} x2={289} y={232} step={5.4} c={DOWN} />
    <Dots x1={292.3} x2={700} y={65} step={5.4} c={DOWN} />
    <Dots x1={10} x2={289} y={387} step={5.4} c="#ffc400" />
    <Dots x1={292.3} x2={700} y={288} step={5.4} c="#ffc400" />
    <Dots x1={10} x2={289} y={542} step={5.4} c={UP} />
    <Dots x1={292.3} x2={700} y={511} step={5.4} c={UP} />
    <text x="8.5" y="60" fontSize="10.5" fill="#9a9a9a" textLength="190">2014 © TD Ameritrade IP Company, Inc.</text>
    <Frame l={5} r={704} t={44} b={561} />
    <Labels x={706.5} items={clPrices.map((s, i) => [s, clY[i]])} />
    <Tag x={707} y={58} w={29} s="94.6" bg="#ff0000" />
    <Tag x={707} y={167} w={34} s="93.54" bg={UP} fg="#003000" />
    <Tag x={707} y={228} w={34} s="92.94" bg="#ff0000" />
    <Tag x={707} y={245} w={34} s="92.78" bg={UP} fg="#003000" />
    <Tag x={707} y={262} w={29} s="92.6" bg="#ff0000" />
    <Tag x={707} y={281} w={34} s="92.43" bg="#ffc000" fg="#201800" />
    <Tag x={707} y={504} w={34} s="90.26" bg={UP} fg="#003000" />
  </svg>
);

const CrudeVolume = () => (
  <svg width="755" height="144" viewBox="5 589 755 144">
    <Grid xs={clX} ys={[610.5, 641.5, 672.5, 702.5]} l={5} r={704} t={589} b={732} />
    <Bars data={clVolume} base={732} w={2} />
    <Frame l={5} r={704} t={589} b={732} />
    <Labels x={706.5} items={[["20,000", 611], ["15,000", 642], ["10,000", 673], ["5,000", 703], ["0", 733.5]]} />
  </svg>
);

const CrudeStudy = () => (
  <svg width="755" height="161" viewBox="5 760 755 161">
    <Grid xs={clX} ys={[773.5, 814.5, 856.5, 897.5]} l={5} r={704} t={760} b={904} />
    <path d="M6 856.5 H699 M6 887.5 H699" stroke="#8c8c8c" shapeRendering="crispEdges" />
    <Bars data={clHist} base={856} w={2} />
    <Line p="6,848 15,855 25,865 32,869 40,870 55,867.5 65,869 77,873 92,873 97,868 104,862 110,860 120,853 126,852 140,859 150,855.5 167,857 177,852 192,843 205,842 214,838 221,831 228,816 237,797 243,782 252,772 255,769.5 260,770.5 268,782 276,793 287,815 297,836 308,852 318,865 330,873 345,885 360,893 375,895.5 400,891.5 412,888 422,884 440,880 460,874 475,871 485,865 497,863 510,859 530,860 552,863 565,857 575,852 585,844 600,831 612,821.5 620,823 630,832 640,844 646,850.5" c="#f0a0a0" />
    <Line p="6,888.5 16,888 20,886 32,881 40,884 54,888 65,881 77,872 86,870 92,871 102,877 120,880 130,875 140,873.5 152,875 167,879 187,876.5 200,878 212,877 222,871 233,861" c="#f0f000" />
    <Line p="6,888.5 16,888" c={DOWN} />
    <Line p="48,886 54,888" c={DOWN} />
    <Line p="233,861 240,852 250,842 260,836 275,831 297,827 315,824 330,823 345,829 363,837 375,846 390,853 396,855" c="#00e000" />
    <Line p="396,855 402,861 415,868 430,873 443,877 452,880 465,886 471,888 475,888 484,884 492,887 508,885 513,886 520,888 533,890 553,888 567,892 575,892 580,890 590,882 602,870 612,863 620,862 628,866 640,869.5 646,869.5" c="#f0f000" />
    <Line p="465,886 471,888" c={DOWN} />
    <Line p="513,886 520,888 533,890 553,888 567,892 575,892 580,890" c={DOWN} />
    <Frame l={5} r={704} t={760} b={904} />
    <Labels x={706.5} items={[["40", 773.5], ["20", 814.5], ["-20", 897.5]]} />
    <Tag x={707} y={822} w={47} s="13.0825" bg="#828282" />
    <Tag x={707} y={843} w={46} s="2.57208" bg="#ffa8a8" fg="#301010" />
    <Tag x={707} y={860} w={39} s="-5.634" bg="#ff0000" />
    <g fill={BROWN} fontSize="11">
      {clTimes.map((t, i) => (
        <text key={i} x={clX[i] - 1} y="918">{t}</text>
      ))}
    </g>
  </svg>
);

/* ---------- natural gas charts ---------- */

const GasPrice = () => (
  <svg width="798" height="520" viewBox="1097 44 798 520">
    <Grid xs={ngX} ys={ngY} l={1097} r={1843} t={44} b={563} />
    <Candles data={ngCandles} w={5} />
    <rect x="1100" y="44" width="508" height="519" fill="rgba(255,255,255,0.235)" shapeRendering="crispEdges" />
    <g fill={REDZONE}>
      <rect x="1509" y="252" width="241" height="11" />
    </g>
    <g fill={GREENZONE}>
      <rect x="1621" y="318" width="17" height="12" />
      <rect x="1724" y="362" width="26" height="8" />
      <rect x="1500" y="326" width="86" height="2" />
    </g>
    <Line p="1098,297 1118,301 1135,306 1170,308 1195,313 1215,319 1240,320 1340,320" c="#d80010" w={2.2} dash />
    <Line p="1350,322 1362,313 1368,301 1375,295 1385,291 1397,291" c="#00f000" w={2.2} dash />
    <Line p="1397,291 1401,275 1407,262 1412,267" c="#e00010" w={2.2} dash />
    <Line p="1414,272 1417,285 1419,305 1421,313 1427,328 1431,304 1440,306 1470,305 1500,303 1578,302" c="#00f000" w={2.2} dash />
    <Line p="1578,302 1583,275 1587,258 1594,268 1600,269" c="#e00010" w={2.2} dash />
    <path d="M1098 299 H1354 L1360 256 L1370 254 H1485 L1493 252 H1604 V328 H1172 L1098 315Z" fill={BOX} />
    <Line p="1600,269 1665,269 1680,282 1690,286 1697,297 1703,307 1708,310 1750,310" c={DOWN} w={2.2} dash />
    <Line p="1098,311 1140,314 1260,314 1310,318 1360,318 1390,313 1430,308 1450,304 1480,297 1510,290 1550,283 1580,279 1608,277 1630,280 1670,285 1690,288 1720,297 1750,307" c="#f00010" />
    <Line p="1098,315 1165,316 1260,317 1320,323 1360,321 1390,316 1420,313 1440,309 1480,304 1500,299 1540,294 1580,290 1620,292 1660,297 1685,301 1700,306 1730,315 1750,322.5" c="#00e610" />
    <Line p="1098,299.5 1354,299.5 1360,256 1370,254.5 1485,254.5 1493,252.5 1604,252.5" c={UP} />
    <Line p="1098,315 1125,320 1172,328.5 1604,328.5" c={UP} w={1} />
    <Cyan x1={1699} x2={1837} y={311.5} />
    <Cyan x1={1699} x2={1837} y={351.5} />
    <Dots x1={1104} x2={1838} y={65} step={8.61} c={DOWN} />
    <Dots x1={1104} x2={1838} y={304} step={8.61} c="#ffc400" />
    <Dots x1={1104} x2={1838} y={544} step={8.61} c={UP} />
    <text x="1100.5" y="60" fontSize="10.5" fill="#9a9a9a" textLength="190">2014 © TD Ameritrade IP Company, Inc.</text>
    <Frame l={1097} r={1843} t={44} b={563} />
    <Labels x={1845.5} items={ngPrices.slice(1).map((s, i) => [s, ngY[i + 1]])} />
    <Tag x={1846} y={58} w={34} s="3.997" bg="#ff0000" />
    <Tag x={1846} y={230} w={34} s="3.907" bg="#ff0000" />
    <Tag x={1846} y={275} w={34} s="3.883" bg="#0000ff" />
    <Tag x={1846} y={300} w={28} s="3.87" bg="#ff0000" />
    <Tag x={1846} y={319} w={28} s="3.86" bg="#ff0000" />
    <Tag x={1846} y={344} w={34} s="3.847" bg="#ff0000" />
    <Tag x={1846} y={536} w={34} s="3.745" bg={UP} fg="#003000" />
  </svg>
);

const GasVolume = () => (
  <svg width="798" height="143" viewBox="1097 591 798 143">
    <Grid xs={ngX} ys={[600.5, 634.5, 667.5, 701.5]} l={1097} r={1843} t={591} b={733} />
    <Bars data={ngVolume} base={733} w={3} />
    <Frame l={1097} r={1843} t={591} b={733} />
    <Labels x={1845.5} items={[["400", 601], ["300", 635], ["200", 668], ["100", 702], ["0", 734.5]]} />
  </svg>
);

const GasStudy = () => (
  <svg width="798" height="160" viewBox="1097 761 798 160">
    <defs>
      <clipPath id="gasAxis"><rect x="1097" y="761" width="798" height="144" /></clipPath>
    </defs>
    <Grid xs={ngX} ys={[790.5, 818.5, 847.5, 875.5]} l={1097} r={1843} t={761} b={904} />
    <path d="M1098 771.5 H1837 M1100 880.5 H1837" stroke="#8c8c8c" shapeRendering="crispEdges" />
    <Bars data={ngHist} base={771} w={3} />
    <Line p="1098,769.5 1131,771.5 1165,773 1240,772.5 1346,771 1380,766.5 1410,765.5 1431,767 1450,768 1475,769.5 1505,770.5 1535,773 1570,774 1600,776 1630,776 1665,775 1710,777.5 1735,777 1750,776" c="#ffb0b0" w={1.2} />
    <Line p="1098,880 1112,891 1121,894 1131,896 1147,892.5 1165,895 1180,886 1190,881 1200,880" c={DOWN} />
    <Line p="1200,880 1224,878.5" c="#ffff00" />
    <Line p="1224,878.5 1233,881 1242,888 1251,893 1259,891 1268,896 1277,896 1294,891 1311,891.5 1320,898 1328,902 1337,904 1346,902 1354,889" c={DOWN} />
    <Line p="1354,889 1363,855 1388,778" c="#ffff00" />
    <Line p="1388,778 1397,761.5 1404,764" c="#00ff00" />
    <Line p="1404,764 1414,774" c="#ffff00" />
    <Line p="1414,774 1422,769 1431,763 1440,761.5 1448,764 1456,768" c="#00ff00" />
    <Line p="1456,768 1466,775 1475,778 1484,779 1492,776.5 1500,773.5 1509,777 1517,785 1526,799 1535,812 1552,818 1569,818 1578,828 1587,835 1604,841 1612,846 1630,863 1647,876 1665,872 1690,847 1698,833 1707,817 1716,810 1724,812 1741,810.5 1750,810.5" c="#ffff00" />
    <Frame l={1097} r={1843} t={761} b={904} />
    <g clipPath="url(#gasAxis)">
      <Labels x={1845.5} items={[["100%", 762.5], ["80%", 791], ["60%", 819], ["40%", 848], ["20%", 876], ["0%", 905.5]]} />
    </g>
    <g fill={BROWN} fontSize="11">
      {ngTimes.map((t, i) => (
        <text key={i} x={ngX[i] - 1} y="918">{t}</text>
      ))}
    </g>
  </svg>
);

/* ---------- assembled parts ---------- */

const Tools = ({ tf }: { tf: string }) => (
  <>
    <ToolButton $w={55}><ShareIcon />Share</ToolButton>
    <ToolIcon $w={19}><FilterIcon /></ToolIcon>
    <ToolIcon $w={19}><WrenchIcon /></ToolIcon>
    <Timeframe $w={32}>{tf}</Timeframe>
    <ToolButton $w={49} $gap={4}><CandleIcon />Style</ToolButton>
    <ToolButton $w={73} $gap={4}><PencilIcon />Drawings</ToolButton>
    <ToolButton $w={61} $gap={5}><StudyIcon />Studies</ToolButton>
    <ToolButton $w={66} $gap={6}><PatternIcon />Patterns</ToolButton>
  </>
);

type Cell = { s: string; w: number; c?: string; b?: boolean; sp?: number };
const Info = ({ w, cells }: { w: number; cells: Cell[] }) => (
  <InfoBar $w={w}>
    {cells.map((c, i) => (
      <InfoCell key={i} $w={c.w} $c={c.c} $b={c.b} $s={c.sp}>{c.s}</InfoCell>
    ))}
  </InfoBar>
);

const ladderVolume: [string, number][] = [
  ["", 20], ["638", 26], ["681", 28], ["", 19], ["", 21], ["809", 33], ["593", 24], ["717", 29], ["787", 32], ["808", 33], ["719", 29], ["", 20],
];

const ladderPl = (i: number) => (i === 0 ? "$6,..." : i < 7 ? "$7,..." : i < 20 ? "$8,..." : "$1...");

export default function App() {
  return (
    <Page>
      <GlobalStyle />
      <LeftWindow>
        <TitleBar $blue>
          <LinkDot />
          <SymbolBox>
            <SymbolText>/CLX4</SymbolText>
            <SymbolArrow><DoubleDown /></SymbolArrow>
          </SymbolBox>
          <AlertBadge>1</AlertBadge>
          <Title $w={419}>Light Sweet Crude Oil Futures,Nov-2014,ETH</Title>
          <Tools tf="15m" />
          <NetPos>Net Pos: -15</NetPos>
          <LastPrice $w={42}>92.60</LastPrice>
          <Change><span>-.20</span><span>-0.22%</span></Change>
        </TitleBar>
        <LeftBody>
          <BlueEdge />
          <ChartColumn $w={755}>
            <HeadRow>
              <Info
                w={700}
                cells={[
                  { s: "/CLX4 5 d 15m", w: 84, c: "#0aa028", b: true, sp: -0.05 },
                  { s: "D: 9/25/14 10:15 AM", w: 107 },
                  { s: "O: 93.03", w: 50 },
                  { s: "H: 93.03", w: 49 },
                  { s: "L: 92.57", w: 48 },
                  { s: "C: 92.6", w: 43 },
                  { s: "R: 0.46", w: 43 },
                  { s: "FPL: N/A", w: 51 },
                  { s: "TS_MultiStops (3.0, 20, no, 3, 1.23, Ave...", w: 209, c: "#f00a14" },
                ]}
              />
              <ScaleButton><SCurve /></ScaleButton>
            </HeadRow>
            <CrudePrice />
            <Gripper $w={700} />
            <Info w={700} cells={[{ s: "Volume", w: 44 }, { s: "8,932", w: 36 }]} />
            <CrudeVolume />
            <Gripper $w={700} />
            <Info
              w={700}
              cells={[
                { s: "tfpZLACD2 (12, 24, 9, 30, YES, 0.01, 14, 15.0, 30.0)", w: 259, c: "#f00a14", sp: -0.05 },
                { s: "-5.63397", w: 52, c: "#f00a14" },
                { s: "2.57208", w: 48, c: "#f8b0b0" },
                { s: "-6.59695", w: 52, c: "#ffff00" },
                { s: "-15", w: 25, c: "#8c8c8c" },
                { s: "0", w: 15, c: "#8c8c8c" },
                { s: "N/A", w: 27, c: "#00f000" },
                { s: "N/A", w: 27, c: "#8c8c8c" },
              ]}
            />
            <CrudeStudy />
            <BottomBar>
              <BottomButton $w={17}><CrossIcon /></BottomButton>
              <BottomButton><ZoomIcon /></BottomButton>
              <BottomButton><ZoomIcon minus /></BottomButton>
              <BottomButton><DollarIcon /></BottomButton>
              <Arrow><Tri d="M6.5 0 L2 4.5 L6.5 9Z" /></Arrow>
              <Track $w={469} />
              <Thumb $w={154} />
              <Arrow><Tri d="M2.5 0 L7 4.5 L2.5 9Z" /></Arrow>
              <BottomButton><ExpandIcon /></BottomButton>
            </BottomBar>
          </ChartColumn>
          <Side>
            <Controls>
              <ButtonRow $top={3}>
                <OrderButton $w={65} $tone="buy">Buy MKT</OrderButton>
                <OrderButton $w={63} $tone="sell">Sell MKT</OrderButton>
                <OrderButton $w={68} $tone="off">Cancel...</OrderButton>
                <Spacer />
                <SetupIcon viewBox="0 0 17 22">
                  <path d="M8 24 H16" stroke="#c08038" strokeWidth="3.4" />
                  <path d="M0.5 21.5 H4 L6 24 H9 M0.5 26.5 H4 L6 24" stroke="#d8def0" strokeWidth="2" fill="none" />
                </SetupIcon>
              </ButtonRow>
              <ButtonRow $top={5}>
                <OrderButton $w={63}>Reverse</OrderButton>
                <OrderButton $w={54}>Flatten</OrderButton>
              </ButtonRow>
              <QtyRow>
                <svg width="16" height="14" viewBox="0 0 16 14">
                  <path d="M6 12 L3 14 L3.5 10Z" fill="#3b8fd0" />
                  <circle cx="7" cy="6.5" r="5.6" fill="#b8e0f8" stroke="#2b80c0" />
                  <text x="7" y="10.5" fontSize="10" fontWeight="bold" textAnchor="middle" fill="#0a5090">?</text>
                </svg>
                <Label $w={24}>Qty:</Label>
                <QtyInput>
                  +5
                  <svg width="14" height="16" viewBox="0 0 14 16">
                    <rect x="2" width="12" height="16" fill="#151a20" />
                    <path d="M4 6 H11 L7.5 2.5Z M4 10.5 H11 L7.5 14Z" fill="#1a68c8" />
                  </svg>
                </QtyInput>
                <QtyCell $w={28}>1</QtyCell>
                <QtyCell $w={28}>3</QtyCell>
                <QtyCell $w={28}>5</QtyCell>
                <QtyCell $w={34}>10</QtyCell>
                <QtyCell $w={34}>20</QtyCell>
              </QtyRow>
              <TemplateRow>
                <Label $w={49}>Template:</Label>
                <TemplateBox>Single</TemplateBox>
                <Check />
                auto send
              </TemplateRow>
            </Controls>
            <SummaryRow>
              <Pin />
              <Summary>
                <SummaryCell $wide $bg="#001a00">P/L Day <em>$8,800.00</em></SummaryCell>
                <SummaryCell $bg="linear-gradient(#2a1214, #5a2c2e)">Avg Price <Mark /><i>93.2133333</i> <Mark $left /></SummaryCell>
                <SummaryCell $bg="#001a00">P/L Open <em>$9,200.00</em></SummaryCell>
                <SummaryCell $bg="#000">B/S<Big><b>0</b> by <b>15</b></Big></SummaryCell>
                <SummaryCell $bg="#240000">Pos Short<Big><b>-15</b></Big></SummaryCell>
              </Summary>
            </SummaryRow>
            <LadderArea>
              <Ladder>
                <LadderHead>
                  <HeadCell $pin><Pin />Orders</HeadCell>
                  <HeadCell>Volu...</HeadCell>
                  <HeadCell>Bi...</HeadCell>
                  <HeadCell>Price</HeadCell>
                  <HeadCell>A...</HeadCell>
                  <HeadCell>P/...</HeadCell>
                </LadderHead>
                {Array.from({ length: 34 }, (_, i) => (
                  <LadderRow key={i} $dim={i > 24}>
                    <span />
                    <VolumeCell>
                      {ladderVolume[i] && <VolumeFill $w={ladderVolume[i][1]}>{ladderVolume[i][0]}</VolumeFill>}
                    </VolumeCell>
                    <span /><span>92....</span><span /><span>{ladderPl(i)}</span>
                  </LadderRow>
                ))}
              </Ladder>
              <Scroll>
                <svg width="15" height="46" viewBox="0 0 15 46">
                  <rect width="15" height="45" fill="#c4c4c4" />
                  <g fill="#e8e8e8" stroke="#111" strokeWidth="1.2">
                    <circle cx="8" cy="7" r="5" />
                    <circle cx="8" cy="37" r="5" />
                  </g>
                  <path d="M5 7 H11 M8 4 V10 M5 37 H11 M1.5 13 L4 10.5 M1.5 43 L4 40.5" stroke="#111" strokeWidth="1.6" />
                  <path d="M3 22.5 H12 M5 17.5 H10 L7.5 20.5Z M5 27.5 H10 L7.5 24.5Z" stroke="#333" fill="none" />
                </svg>
                <ScrollBtn><Tri d="M0 6.5 L4.5 2 L9 6.5Z" /></ScrollBtn>
                <ScrollTrack $h={314} />
                <ScrollThumb />
                <ScrollTrack $h={309} />
                <ScrollBtn><Tri d="M0 2.5 L4.5 7 L9 2.5Z" /></ScrollBtn>
              </Scroll>
            </LadderArea>
          </Side>
          <TabStrip>
            <Tab $h={40} $gap={3}>Trade</Tab>
            <TabArrow $gap={4} />
            <Tab $h={94} $gap={2}>Times And Sales</Tab>
            <Tab $h={76} $gap={7} $on>Active Trader</Tab>
            <Tab $h={68} $gap={7}>Big Buttons</Tab>
            <Tab $h={39} $gap={6} $on>Chart</Tab>
            <TabArrow $gap={3} />
            <Tab $h={65} $gap={4}>Dashboard</Tab>
            <Tab $h={46} $gap={7}>Level II</Tab>
            <Tab $h={62} $gap={7}>Live News</Tab>
          </TabStrip>
        </LeftBody>
        <Note>
          ONLY took 2 .30 hours of SONG
          <br />
          and DANCE.
        </Note>
        <CornerTool>
          <svg width="13" height="13" viewBox="0 0 13 13">
            <path d="M1 1 V12 M1.5 1.5 H11.5 V11.5 H1.5" stroke="#aaa" fill="none" />
            <path d="M3 3 L8 6.5 L3 10Z M8 3 H10 V10 H8Z" fill="#ddd" />
          </svg>
        </CornerTool>
        <Notch />
      </LeftWindow>
      <RightWindow>
        <TitleBar>
          <LinkDot />
          <SymbolBox>
            <SymbolText>/NGV4</SymbolText>
            <SymbolArrow><DoubleDown /></SymbolArrow>
          </SymbolBox>
          <svg width="16" height="20" viewBox="0 0 16 20">
            <rect x="8" y="10" width="6" height="7" fill="#0000ff" stroke="#000" />
            <rect x="5" y="8" width="6" height="6" fill="#ffff00" stroke="#000" />
            <rect x="2" y="5" width="6" height="6" fill="#ff0000" stroke="#000" />
          </svg>
          <Title $w={224}>Natural Gas Futures,Oct-2014,ETH</Title>
          <Tools tf="5m" />
          <LastPrice $w={43}>&nbsp;3.847</LastPrice>
          <Change><span>-.0</span><span>-1</span></Change>
        </TitleBar>
        <ChartColumn $w={798}>
          <HeadRow>
            <Info
              w={747}
              cells={[
                { s: "/NGV4 5 d 5m", w: 79, c: "#0aa028", b: true },
                { s: "D: 9/25/14 10:20 AM", w: 107 },
                { s: "O: 3.849", w: 50 },
                { s: "H: 3.851", w: 49 },
                { s: "L: 3.846", w: 48 },
                { s: "C: 3.847", w: 49 },
                { s: "R: 0.005", w: 49 },
                { s: "FPL: N/A", w: 51 },
                { s: "TS_MultiStops (3.0, 20, no, 3, 1.23, AveTrue...", w: 231, c: "#f00a14" },
              ]}
            />
            <ScaleButton><SCurve /></ScaleButton>
          </HeadRow>
          <GasPrice />
          <Gripper $w={747} />
          <Info w={747} cells={[{ s: "Volume", w: 44 }, { s: "139", w: 27 }]} />
          <GasVolume />
          <Gripper $w={747} />
          <Info
            w={747}
            cells={[
              { s: "LBR_SmartADX (14, 15.0, 30.0)", w: 161, c: "#ffff00" },
              { s: "24.6362", w: 48, c: "#ffff00" },
              { s: "15", w: 21, c: "#8c8c8c" },
              { s: "30", w: 21, c: "#8c8c8c" },
              { s: "tfpZLACD2 (12, 24, 9, 30, YES, 0.01, 14, 15.0, 30.0)", w: 260, c: "#800008", sp: -0.05 },
              { s: "-0.438038", w: 58, c: "#800008" },
              { s: "-0.613899", w: 58, c: "#ffb4b4" },
              { s: "-5.36382", w: 52, c: "#ffff00" },
              { s: "-15", w: 25, c: "#8c8c8c" },
              { s: "0", w: 15, c: "#8c8c8c" },
              { s: "N/A", w: 27, c: "#00f000" },
            ]}
          />
          <GasStudy />
          <BottomBar>
            <BottomButton $w={18}><CrossIcon /></BottomButton>
            <BottomButton><ZoomIcon /></BottomButton>
            <BottomButton><ZoomIcon minus /></BottomButton>
            <BottomButton><DollarIcon /></BottomButton>
            <Arrow><Tri d="M6.5 0 L2 4.5 L6.5 9Z" /></Arrow>
            <Track $w={627} />
            <Thumb $w={41} />
            <Arrow><Tri d="M2.5 0 L7 4.5 L2.5 9Z" /></Arrow>
            <BottomButton><ExpandIcon /></BottomButton>
          </BottomBar>
        </ChartColumn>
      </RightWindow>
    </Page>
  );
}
